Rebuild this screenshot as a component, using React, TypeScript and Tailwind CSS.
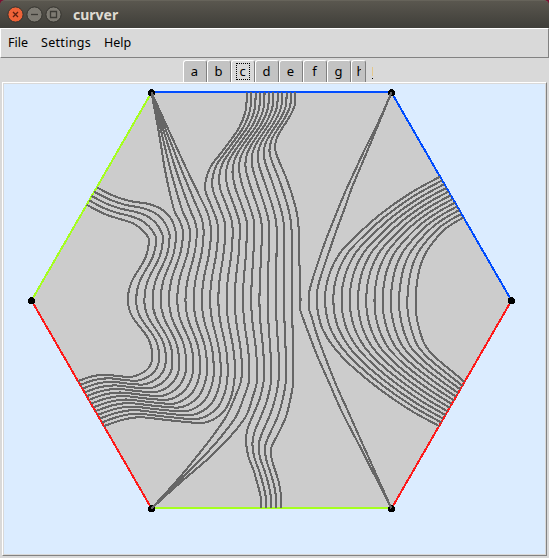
import React from "react";

type Pt = [number, number];
type Group = { from: number; to: number; first: Pt[]; last: Pt[] };

const COUNT = 36;
const UPPER_X = [
  149, 156.2, 163, 169.7, 176, 183, 190, 196.9, 203.7, 211, 218, 225, 232.7, 239.7, 246.7, 254, 261.7, 269, 276.7,
  283.9, 291.7, 298.7,
];
const LOWER_X = [
  152, 159, 165.7, 172.3, 179, 186, 193.2, 200, 206.9, 213.7, 220.7, 227.7, 235, 242, 249.3, 257, 264, 271, 279, 286,
  293,
];

// Each group runs outwards from the centre line to one side or corner of the hexagon.
const UPPER: Group[] = [
  {
    from: 0,
    to: 4,
    first: [[149, 240], [146.7, 235], [141.7, 229.3], [133.3, 223.5], [123.3, 220], [110, 216], [98.3, 211], [86.7, 204.7]],
    last: [[176, 235], [173.3, 223.3], [168.3, 215], [160, 208.3], [148, 203.8], [130, 201], [113, 195.6], [96.7, 187.3]],
  },
  {
    from: 5,
    to: 9,
    first: [[183, 232], [180, 221.7], [175, 212.5], [171.7, 201], [165, 170], [159.3, 135], [151.5, 92.5]],
    last: [[211, 232], [209.8, 221], [207, 211.5], [202, 201], [187, 170], [169.5, 132], [151.5, 92.5]],
  },
  {
    from: 10,
    to: 21,
    first: [[218, 232], [217, 221], [211, 205], [205.5, 191], [206, 179], [211, 166], [219, 155.5], [230, 141], [239.5, 127], [245.5, 111], [247, 92.5]],
    last: [[298.7, 235], [298, 220], [295, 205], [287, 180], [279, 161], [275.3, 150], [276.5, 139], [282, 128.5], [288.5, 118.5], [294.5, 106], [295.5, 92.5]],
  },
  {
    from: 22,
    to: 23,
    first: [[308.3, 300], [309.3, 291.7], [313.3, 276.7], [324, 245], [335, 216.7], [346, 190], [354.5, 171.7], [365, 149], [378, 123], [391.5, 92.5]],
    last: [[316.7, 300], [317.3, 290], [320.7, 276.7], [331.7, 244], [338, 226], [345.5, 206], [351, 190], [358, 173], [366.5, 153], [391.5, 92.5]],
  },
  {
    from: 24,
    to: 35,
    first: [[325, 300], [326, 287], [330.5, 271], [340, 253], [355, 237], [380, 214.5], [410, 193.3], [440, 176.7]],
    last: [[415.3, 300], [416.7, 285], [420, 267], [426, 252.5], [434, 241], [444, 230], [453.3, 223.3], [463.3, 217.7]],
  },
];

const LOWER: Group[] = [
  {
    from: 0,
    to: 12,
    first: [[152, 354], [151.5, 362], [148.3, 368.3], [141.7, 373.3], [131.7, 376.8], [120, 376.3], [106.7, 374.8], [93.3, 376], [78.3, 381]],
    last: [[235, 370], [234, 383], [231, 397], [223.3, 412], [205, 422.5], [173.3, 420.7], [140, 417.2], [122, 420], [104.3, 426]],
  },
  {
    from: 13,
    to: 15,
    first: [[242, 370], [240.5, 383], [235.5, 396], [226.5, 416], [212, 437], [198, 455], [177, 480.5], [151.5, 508.5]],
    last: [[257, 370], [256.5, 384], [253, 396], [245.5, 417], [228, 439], [209, 458], [181, 482], [151.5, 508.5]],
  },
  {
    from: 16,
    to: 20,
    first: [[264, 370], [263.5, 382], [260, 398], [254, 413], [247.5, 429], [246, 442], [248.5, 457], [253.5, 470], [257.5, 484], [260.5, 496], [261.3, 508]],
    last: [[293, 370], [293, 384], [290, 401], [285.5, 418], [277, 436], [271.5, 447], [271.5, 458], [275, 470], [279, 483], [281, 496], [281.3, 508]],
  },
  {
    from: 21,
    to: 22,
    first: [[300, 300], [300.3, 310], [303.3, 319], [310, 337], [318.3, 358.3], [331, 387], [342, 412], [361.7, 450], [391.5, 508.5]],
    last: [[308.3, 300], [309, 309], [312, 318], [317, 335], [325, 356.7], [337, 387], [347, 409], [363.5, 446], [391.5, 508.5]],
  },
  {
    from: 23,
    to: 35,
    first: [[316.5, 300], [318, 313], [323, 330], [334, 347.5], [352, 366.5], [380, 389.5], [410, 410], [439, 426]],
    last: [[415.3, 300], [416, 313], [419.5, 330], [425, 345], [433, 355], [443, 364], [454, 373], [464.5, 382]],
  },
];

function spline(points: Pt[]): string {
  let d = "";
  for (let i = 0; i < points.length - 1; i++) {
    const a = points[Math.max(0, i - 1)];
    const b = points[i];
    const c = points[i + 1];
    const e = points[Math.min(points.length - 1, i + 2)];
    const c1x = i === 0 && Math.abs(b[0] - c[0]) < 4 ? b[0] : b[0] + (c[0] - a[0]) / 6;
    d += ` C${c1x.toFixed(1)} ${(b[1] + (c[1] - a[1]) / 6).toFixed(1)} ${(c[0] - (e[0] - b[0]) / 6).toFixed(1)} ${(
      c[1] - (e[1] - b[1]) / 6
    ).toFixed(1)} ${c[0].toFixed(1)} ${c[1].toFixed(1)}`;
  }
  return d;
}

function strand(i: number, groups: Group[], stations: number[]): string {
  const g = groups.find((k) => i >= k.from && i <= k.to)!;
  const f = (i - g.from) / (g.to - g.from);
  const pts = g.first.map((p, k): Pt => [p[0] + (g.last[k][0] - p[0]) * f, p[1] + (g.last[k][1] - p[1]) * f]);
  const x0 = 127.9 + 8.22 * i;
  if (i >= stations.length) {
    pts[0] = [x0, 300];
    return `M${x0} 300` + spline(pts);
  }
  pts[0][0] = stations[i];
  const [x1, y1] = pts[0];
  const h = (y1 - 300) * 0.46;
  return `M${x0} 300 C${x0} ${300 + h} ${x1} ${y1 - h} ${x1} ${y1}` + spline(pts);
}

const ids = Array.from({ length: COUNT }, (_, i) => i);
const corners: Pt[] = [[151.5, 92.5], [391.5, 92.5], [511.5, 300.5], [391.5, 508.5], [151.5, 508.5], [31.5, 300.5]];
const sides = ["#004cff", "#004cff", "#ff1a1a", "#a5ff1f", "#ff1a1a", "#a5ff1f"];

function Surface() {
  return (
    <svg width="541" height="470" viewBox="4 84 541 470" className="block" shapeRendering="crispEdges">
      <polygon points={corners.map((p) => p.join(",")).join(" ")} fill="#cccccc" />
      {corners.map((p, i) => {
        const q = corners[(i + 1) % 6];
        const dy = p[1] === q[1] ? -0.5 : 0;
        return <line key={i} x1={p[0]} y1={p[1] + dy} x2={q[0]} y2={q[1] + dy} stroke={sides[i]} strokeWidth="2" />;
      })}
      {corners.map((p, i) => (
        <circle key={i} cx={p[0]} cy={p[1]} r="3.5" fill="#000" />
      ))}
      <g fill="none" stroke="#666666" strokeWidth="2.05">
        {ids.map((i) => (
          <path key={i} d={strand(i, UPPER, UPPER_X)} />
        ))}
        {ids.map((i) => (
          <path key={i} d={strand(i, LOWER, LOWER_X)} />
        ))}
      </g>
    </svg>
  );
}

function WindowButton({ kind }: { kind: "close" | "min" | "max" }) {
  const close = kind === "close";
  return (
    <svg width="17" height="17" viewBox="0 0 17 17">
      <circle cx="8.5" cy="8.5" r="7.6" fill={close ? "#ee6338" : "#7e7b73"} stroke="#35342f" strokeWidth="1" />
      <g fill="none" stroke={close ? "#5b2010" : "#3c3b36"} strokeWidth="1.3">
        {kind === "close" && <path d="M6 6l5 5M11 6l-5 5" />}
        {kind === "min" && <path d="M5 8.5h7" />}
        {kind === "max" && <path d="M5.5 5.5h6v6h-6z" />}
      </g>
    </svg>
  );
}

function Tab({ label }: { label: string }) {
  const on = label === "c";
  return (
    <div
      className={
        "flex items-center justify-center overflow-hidden rounded-t-[3px] border-t border-r border-l border-t-white border-r-[#7f7f7f] border-l-white " +
        (label === "h" ? "w-[15px] " : "w-6 ") +
        (on ? "h-[23px] bg-[#d9d9d9]" : "h-[22px] bg-[#c3c3c3]")
      }
    >
      {on ? (
        <span className="mr-px mb-px flex h-[17px] w-[14px] items-center justify-center border border-dotted border-black pb-px">
          c
        </span>
      ) : label === "h" ? (
        <span className="w-[4px] overflow-hidden pb-px">h</span>
      ) : (
        <span className="pr-px pb-px">{label}</span>
      )}
    </div>
  );
}

export default function App() {
  return (
    <div className="flex h-[558px] w-[549px] flex-col overflow-hidden bg-[#7a1030] font-['Noto_Sans',sans-serif] text-[13px] leading-4 text-black">
      <div className="flex h-7 shrink-0 items-center gap-[2px] rounded-t-[5px] border-t border-[#66635a] bg-linear-to-b from-[#5a574f] to-[#3f3e39] pl-[7px]">
        <WindowButton kind="close" />
        <WindowButton kind="min" />
        <WindowButton kind="max" />
        <span className="pl-[9px] text-sm font-bold text-[#dfdbd2]">curver</span>
      </div>
      <div className="flex h-[30px] shrink-0 items-center gap-[13px] border border-t-white border-r-[#828282] border-b-[#828282] border-l-white bg-[#d9d9d9] pl-[7px] text-[12.5px]">
        <span>File</span>
        <span className="tracking-[0.3px]">Settings</span>
        <span>Help</span>
      </div>
      <div className="flex min-h-0 flex-1 flex-col bg-[#d9d9d9] px-[2px]">
        <div className="flex h-6 shrink-0 items-start pt-[2px] pl-[181px]">
          {["a", "b", "c", "d", "e", "f", "g", "h"].map((t) => (
            <Tab key={t} label={t} />
          ))}
          <div className="flex flex-col gap-[2px] pt-[7px] pl-[6px]">
            <span className="h-[9px] w-px bg-[#e3c88e]" />
            <span className="h-px w-px bg-black" />
          </div>
        </div>
        <div className="w-[545px] border border-t-white border-r-[#828282] border-b-[#828282] border-l-white bg-[#d9d9d9] p-px">
          <div className="bg-[#dbecff]">
            <Surface />
          </div>
        </div>
      </div>
    </div>
  );
}
